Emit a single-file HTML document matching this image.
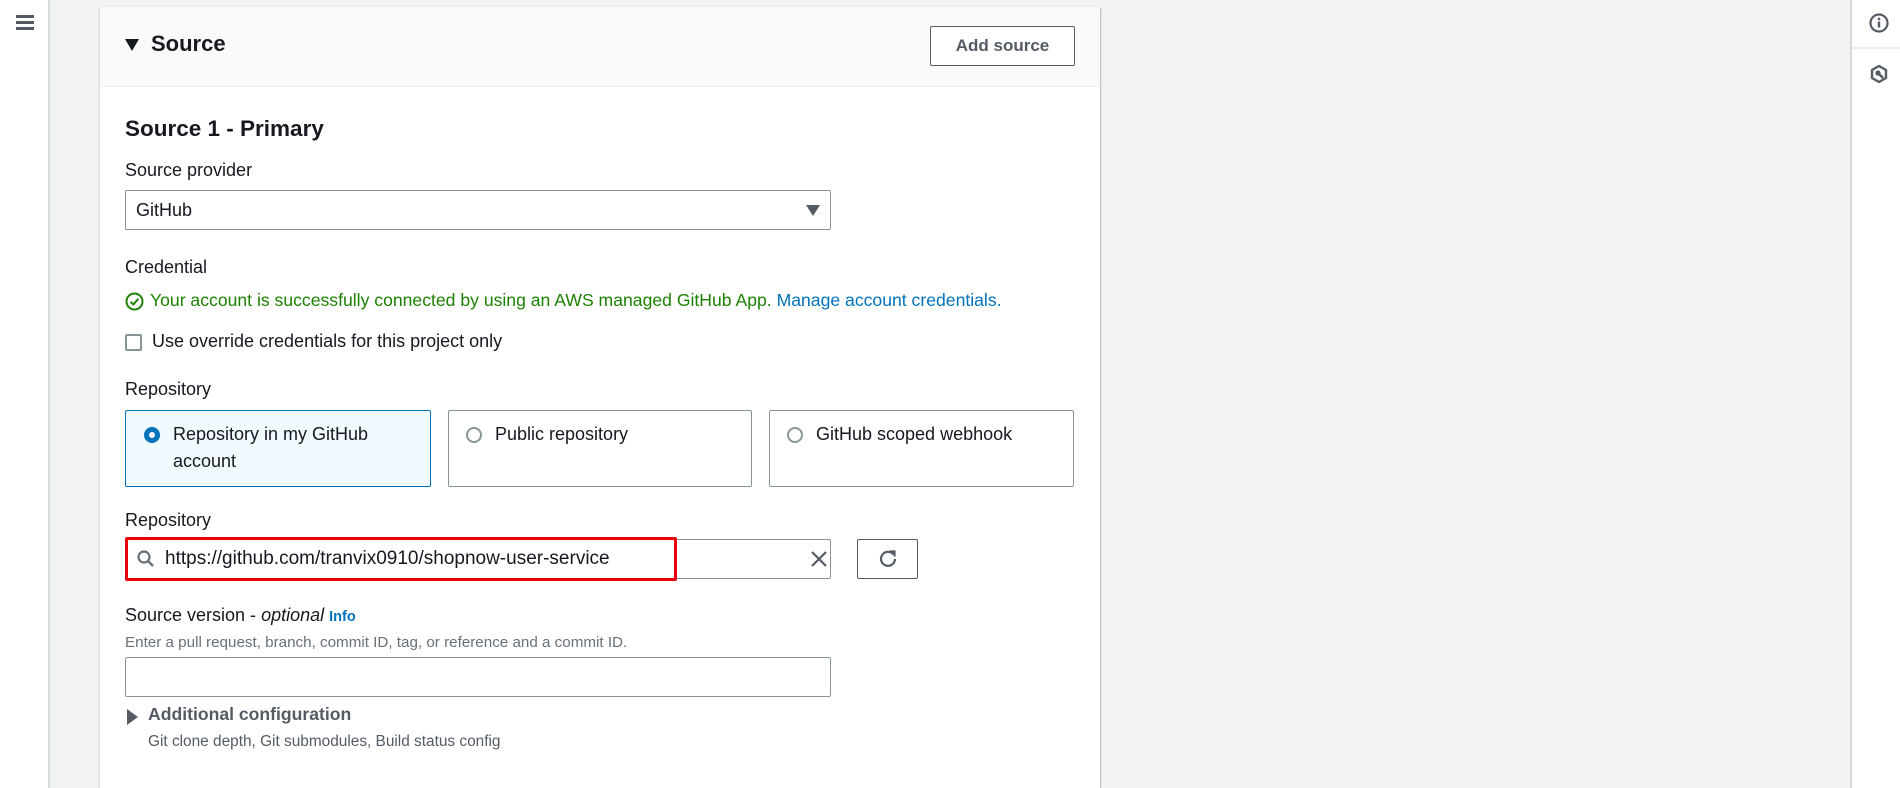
<!DOCTYPE html>
<html><head><meta charset="utf-8"><style>
*{box-sizing:border-box;margin:0;padding:0}
body{width:1900px;height:788px;overflow:hidden;background:#f2f3f3;font-family:"Liberation Sans",sans-serif;color:#16191f;position:relative;font-size:18px}
.a{position:absolute;white-space:nowrap}
.lnav{left:0;top:0;width:50px;height:788px;background:#fff;border-right:2px solid #d5dbdb}
.rnav{left:1850px;top:0;width:50px;height:788px;background:#fff;border-left:2px solid #d5dbdb}
.panel{left:100px;top:7px;width:1000px;height:781px;background:#fff;box-shadow:0 1px 2px rgba(0,28,36,.3),1px 1px 1px rgba(0,28,36,.15)}
.hdr{left:0;top:0;width:1000px;height:80px;background:#fafafa;border-bottom:1px solid #eaeded}
.btn{border:1px solid #545b64;background:#fff;border-radius:2px;font-weight:bold;color:#545b64;font-size:17px;display:flex;align-items:center;justify-content:center}
.inp{border:1px solid #aab7b8;border-radius:2px;background:#fff}
.tile{border:1px solid #aab7b8;border-radius:2px;background:#fff}
.radio{width:16px;height:16px;border-radius:50%;border:2px solid #879596;background:#fff}
</style></head><body>
<div class="a lnav"><div class="a" style="left:16px;top:15px;width:18px;height:3px;background:#545b64"></div><div class="a" style="left:16px;top:21px;width:18px;height:3px;background:#545b64"></div><div class="a" style="left:16px;top:27px;width:18px;height:3px;background:#545b64"></div></div>
<div class="a rnav">
<svg class="a" style="left:16px;top:12px" width="22" height="22" viewBox="0 0 22 22"><circle cx="11" cy="11" r="8.5" fill="none" stroke="#545b64" stroke-width="2.2"/><rect x="9.8" y="9.5" width="2.4" height="6" fill="#545b64"/><rect x="9.8" y="5.8" width="2.4" height="2.4" fill="#545b64"/></svg>
<div class="a" style="left:0;top:47px;width:50px;height:2px;background:#eaeded"></div>
<svg class="a" style="left:16px;top:63px" width="22" height="22" viewBox="0 0 22 22"><path d="M11 3L18 7V15L11 19L4 15V7Z" fill="none" stroke="#545b64" stroke-width="2.4" stroke-linejoin="round"/><circle cx="10" cy="10" r="2.6" fill="#545b64"/><path d="M10 10L15 15" stroke="#545b64" stroke-width="2.6"/></svg>
</div>
<div class="a panel">
<div class="a hdr">
<svg class="a" style="left:25px;top:32px" width="14" height="12"><path d="M0 0H14L7 12Z" fill="#16191f"/></svg>
<div class="a" style="left:51px;top:24px;font-size:22px;font-weight:bold">Source</div>
<div class="a btn" style="left:830px;top:19px;width:145px;height:40px">Add source</div>
</div>
<div class="a" style="left:25px;top:109px;font-size:22.5px;font-weight:bold">Source 1 - Primary</div>
<div class="a" style="left:25px;top:153px">Source provider</div>
<div class="a inp" style="left:25px;top:183px;width:706px;height:40px;border-color:#879596"><span class="a" style="left:10px;top:9px">GitHub</span><svg class="a" style="left:680px;top:14px" width="14" height="12"><path d="M0 0H14L7 11Z" fill="#545b64"/></svg></div>
<div class="a" style="left:25px;top:250px">Credential</div>
<svg class="a" style="left:25px;top:285px" width="19" height="19" viewBox="0 0 19 19"><circle cx="9.5" cy="9.5" r="8" fill="none" stroke="#1d8102" stroke-width="2"/><path d="M5.5 9.8L8.3 12.5L13.5 6.8" fill="none" stroke="#1d8102" stroke-width="2"/></svg>
<div class="a" style="left:50px;top:283px;color:#1d8102;font-size:17.6px">Your account is successfully connected by using an AWS managed GitHub App. <span style="color:#0073bb">Manage account credentials.</span></div>
<div class="a" style="left:25px;top:327px;width:17px;height:17px;border:2px solid #879596;border-radius:2px"></div>
<div class="a" style="left:52px;top:324px">Use override credentials for this project only</div>
<div class="a" style="left:25px;top:372px">Repository</div>
<div class="a tile" style="left:25px;top:403px;width:306px;height:77px;background:#f1faff;border-color:#0073bb"><div class="a radio" style="left:18px;top:16px;border:5px solid #0073bb"></div><div class="a" style="left:47px;top:10px;line-height:27px">Repository in my GitHub<br>account</div></div>
<div class="a tile" style="left:348px;top:403px;width:304px;height:77px;border-color:#879596"><div class="a radio" style="left:17px;top:16px"></div><div class="a" style="left:46px;top:10px;line-height:27px">Public repository</div></div>
<div class="a tile" style="left:669px;top:403px;width:305px;height:77px;border-color:#879596"><div class="a radio" style="left:17px;top:16px"></div><div class="a" style="left:46px;top:10px;line-height:27px">GitHub scoped webhook</div></div>
<div class="a" style="left:25px;top:503px">Repository</div>
<div class="a inp" style="left:25px;top:532px;width:706px;height:40px;border-color:#879596"><svg class="a" style="left:684px;top:10px" width="18" height="18"><path d="M2 2L16 16M16 2L2 16" stroke="#545b64" stroke-width="2.2"/></svg></div>
<div class="a" style="left:25px;top:530px;width:552px;height:44px;border:3px solid #e8000b;border-radius:2px"></div>
<svg class="a" style="left:36px;top:542px" width="20" height="20" viewBox="0 0 20 20"><circle cx="8" cy="8" r="5.5" fill="none" stroke="#687078" stroke-width="2.2"/><path d="M12 12L17 17" stroke="#687078" stroke-width="2.4"/></svg>
<div class="a" style="left:65px;top:541px;font-size:19px">https://github.com/tranvix0910/shopnow-user-service</div>
<div class="a btn" style="left:757px;top:532px;width:61px;height:40px;border-color:#545b64"><svg width="22" height="22" viewBox="0 0 22 22"><path d="M16.5 6.5A7 7 0 1 0 18 11" fill="none" stroke="#545b64" stroke-width="2.2"/><path d="M12.5 3.5H17.5V8.5" fill="none" stroke="#545b64" stroke-width="2.2"/></svg></div>
<div class="a" style="left:25px;top:598px">Source version - <i>optional</i> <b style="color:#0073bb;font-size:14.5px">Info</b></div>
<div class="a" style="left:25px;top:627px;font-size:15.2px;color:#687078">Enter a pull request, branch, commit ID, tag, or reference and a commit ID.</div>
<div class="a inp" style="left:25px;top:650px;width:706px;height:40px;border-color:#879596"></div>
<svg class="a" style="left:27px;top:702px" width="11" height="16"><path d="M0 0L11 8L0 16Z" fill="#545b64"/></svg>
<div class="a" style="left:48px;top:697px;font-weight:bold;color:#545b64;font-size:17.6px">Additional configuration</div>
<div class="a" style="left:48px;top:726px;font-size:15.4px;color:#545b64">Git clone depth, Git submodules, Build status config</div>
</div>
</body></html>
